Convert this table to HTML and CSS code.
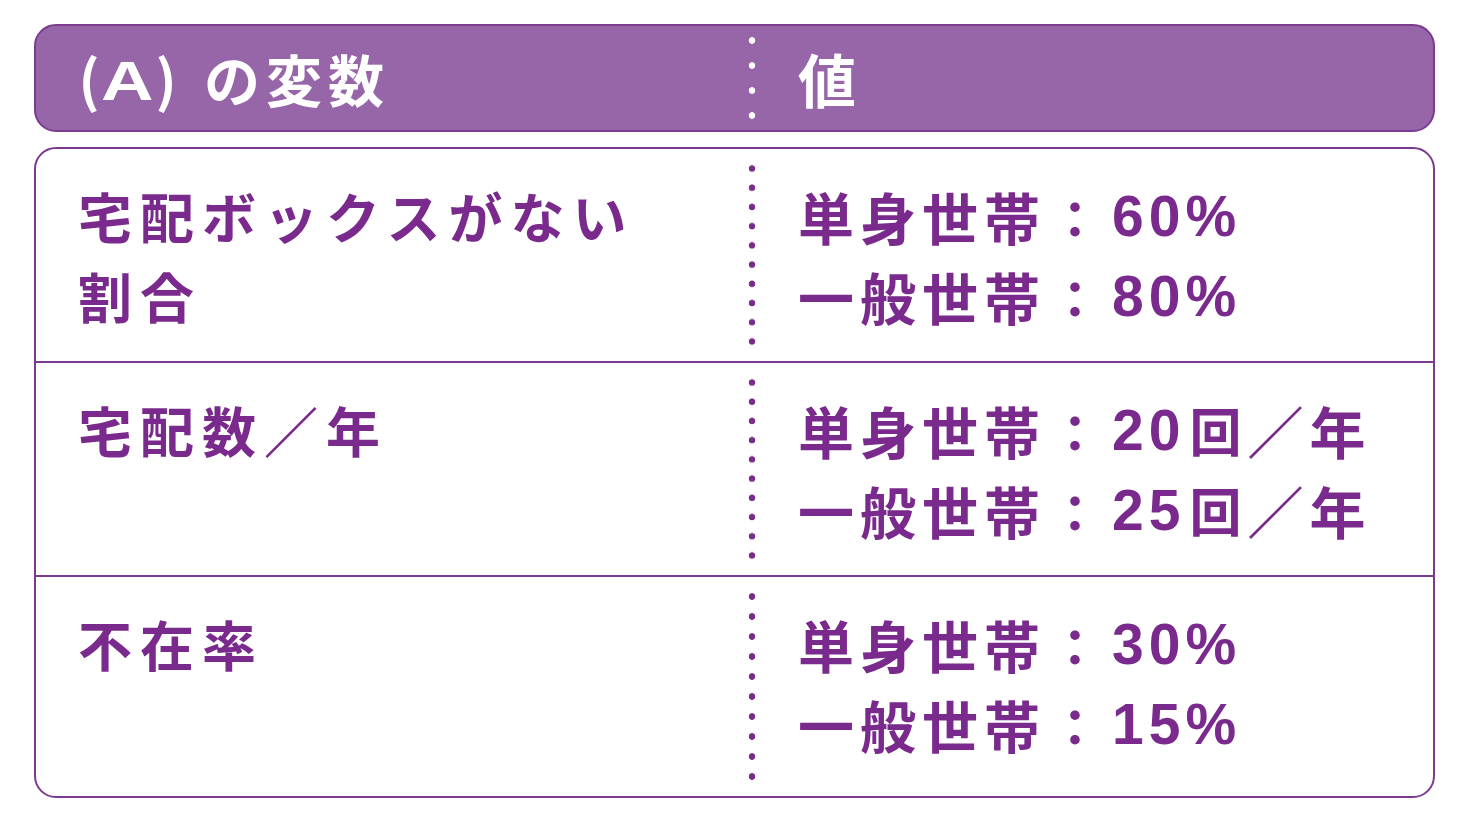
FILE: index.html
```html
<!DOCTYPE html>
<html lang="ja">
<head>
<meta charset="utf-8">
<link rel="stylesheet" href="styles.css">
</head>
<body>
<div class="page">
  <div class="head">
    <div class="cell left"><span class="p1">(</span><span class="a"><span class="a-in">A</span></span><span class="p2">)</span><span class="htext">の変数</span></div>
    <div class="sep sep-white"></div>
    <div class="cell right">値</div>
  </div>
  <div class="table">
    <div class="row">
      <div class="cell left"><div class="line">宅配ボックスがない</div><div class="line">割合</div></div>
      <div class="sep"></div>
      <div class="cell right"><div class="line">単身世帯<span class="colon">：</span><span class="num">60%</span></div><div class="line">一般世帯<span class="colon">：</span><span class="num">80%</span></div></div>
    </div>
    <div class="row">
      <div class="cell left"><div class="line">宅配数／年</div></div>
      <div class="sep"></div>
      <div class="cell right"><div class="line">単身世帯<span class="colon">：</span><span class="num">20</span><span class="kai">回</span>／年</div><div class="line">一般世帯<span class="colon">：</span><span class="num">25</span><span class="kai">回</span>／年</div></div>
    </div>
    <div class="row last">
      <div class="cell left"><div class="line">不在率</div></div>
      <div class="sep"></div>
      <div class="cell right"><div class="line">単身世帯<span class="colon">：</span><span class="num">30%</span></div><div class="line">一般世帯<span class="colon">：</span><span class="num">15%</span></div></div>
    </div>
  </div>
</div>
</body>
</html>
```
FILE: styles.css
```css
* { box-sizing: border-box; }
html, body { margin: 0; padding: 0; background: #ffffff; }
body {
  font-family: "Noto Sans CJK JP", "Noto Sans", sans-serif;
  font-weight: 700;
}
.page {
  padding: 24px 0 0 34px;
  width: 1435px;
}
.head {
  display: grid;
  grid-template-columns: 712px 8px 1fr;
  height: 108px;
  background: #9766a9;
  border: 2px solid #7b3b8e;
  border-radius: 22px;
  color: #ffffff;
  margin-bottom: 15px;
}
.head .cell {
  display: flex;
  align-items: center;
  font-size: 56px;
  line-height: 1;
  white-space: nowrap;
}
.head .left { padding-left: 42px; }
.head .right { padding-left: 42px; font-size: 58px; }
.head .sep { margin: 5px 0; }
.p1, .p2, .a {
  display: inline-block;
  text-align: center;
}
.p1 { width: 22px; }
.p2 { width: 24px; }
.a { width: 54px; }
.a-in {
  display: inline-block;
  font-family: "Liberation Sans", Arial, sans-serif;
  font-weight: 700;
  transform: scaleX(1.3);
}
.htext {
  margin-left: 26px;
  letter-spacing: 6px;
}

.sep {
  background-image: radial-gradient(circle at center, #7a2c8c 3px, rgba(122,44,140,0) 3.6px);
  background-size: 8px 19px;
  background-repeat: space;
  margin: 10px 0;
}
.sep-white {
  background-image: radial-gradient(circle at center, #ffffff 3px, rgba(255,255,255,0) 3.6px);
}

.table {
  border: 2px solid #7b3a8e;
  border-radius: 22px;
  height: 651px;
  display: flex;
  flex-direction: column;
}
.row {
  display: grid;
  grid-template-columns: 712px 8px 1fr;
  border-bottom: 2px solid #7b3a8e;
  height: 214px;
}
.row.last { border-bottom: none; flex: 1; }
.row .cell {
  color: #7a2a8c;
  padding-top: 27px;
  white-space: nowrap;
}
.line {
  height: 80px;
  line-height: 80px;
}
.row .left {
  padding-left: 42px;
  font-size: 54px;
  letter-spacing: 8px;
}
.row .right {
  padding-left: 42px;
  font-size: 56px;
  letter-spacing: 6px;
}
.right .line { display: flex; align-items: center; }
.colon {
  display: inline-block;
  width: 62px;
  letter-spacing: 0;
  text-align: center;
  font-size: 50px;
  margin-left: -2px;
}
.num {
  font-family: "Liberation Sans", Arial, sans-serif;
  font-size: 57px;
  font-weight: 700;
  letter-spacing: 5px;
  margin-left: 6px;
  line-height: 1;
}
.kai {
  font-size: 52px;
  margin-left: 4px;
}
```
